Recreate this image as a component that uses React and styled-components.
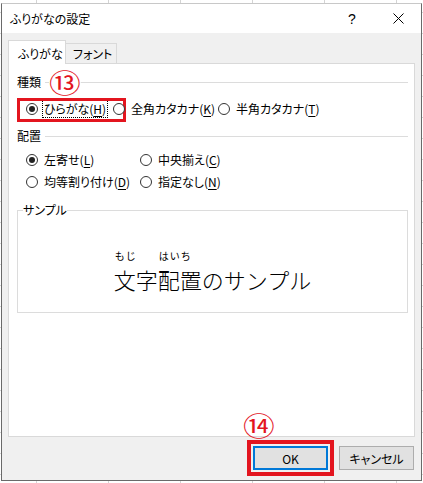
import React from 'react';
import styled, { createGlobalStyle, css } from 'styled-components';

const GlobalStyle = createGlobalStyle`
  html, body {
    margin: 0;
    padding: 0;
    background: #fff;
  }
  body {
    font-family: "Noto Sans CJK JP", "Noto Sans", sans-serif;
    color: #000;
  }
`;

const RED = '#e3151f';

const Page = styled.div`
  width: 423px;
  height: 483px;
  box-sizing: border-box;
  padding: 3px 0 0 1px;
  background-color: #fff;
  background-image:
    linear-gradient(to right, #d4d4d4 1px, transparent 1px),
    linear-gradient(to bottom, #d4d4d4 1px, transparent 1px);
  background-size: 72px 100%, 100% 21px;
  background-position: 36px 0, 0 12px;
`;

const Dialog = styled.div`
  width: 421px;
  height: 478px;
  box-sizing: border-box;
  border: 1px solid #6a6a6a;
  border-top-color: #c8c8c8;
  background: #f0f0f0;
  display: flex;
  flex-direction: column;
  font-size: 12px;
  font-feature-settings: "palt";
`;

const TitleBar = styled.div`
  height: 29px;
  flex-shrink: 0;
  background: #fff;
  display: flex;
  align-items: center;
  justify-content: space-between;
  padding-left: 8px;
`;

const Title = styled.span`
  font-size: 12px;
  line-height: 18px;
`;

const TitleButtons = styled.div`
  display: flex;
  align-items: center;
  height: 100%;
`;

const TitleButton = styled.span`
  width: 46px;
  height: 100%;
  display: flex;
  align-items: center;
  justify-content: center;
  font-size: 14px;
  font-family: "Liberation Sans", "DejaVu Sans", sans-serif;
`;

const Body = styled.div`
  flex: 1;
  display: flex;
  flex-direction: column;
  padding: 7px 6px 10px 6px;
`;

const TabList = styled.div`
  display: flex;
  align-items: flex-end;
  height: 24px;
  margin-bottom: -1px;
  position: relative;
  z-index: 1;
`;

const Tab = styled.div`
  box-sizing: border-box;
  border: 1px solid #d9d9d9;
  display: flex;
  align-items: center;
  line-height: 18px;
  ${p => p.$active
    ? css`
        height: 24px;
        width: 58px;
        background: #fff;
        border-bottom: none;
        padding: 2px 0 0 9px;
      `
    : css`
        height: 21px;
        width: 51px;
        background: #f0f0f0;
        border-left: none;
        padding: 1px 0 0 7px;
      `}
`;

const Panel = styled.div`
  height: 374px;
  box-sizing: border-box;
  background: #fff;
  border: 1px solid #d9d9d9;
  padding: 9px 6px 0 8px;
  display: flex;
  flex-direction: column;
`;

const SectionHeader = styled.div`
  position: relative;
  display: flex;
  align-items: center;
  gap: 4px;
  height: 18px;
  margin-top: ${p => p.$gap || 0}px;
`;

const SectionLabel = styled.span`
  line-height: 18px;
`;

const Rule = styled.span`
  flex: 1;
  height: 1px;
  background: #dcdcdc;
  margin-top: ${p => p.$offset || 0}px;
`;

const OptionGrid = styled.div`
  display: grid;
  grid-template-columns: ${p => p.$cols};
  row-gap: 4px;
  padding-left: 9px;
  margin-top: ${p => p.$gap}px;
`;

const Option = styled.label`
  position: relative;
  display: inline-flex;
  align-items: center;
  gap: 4px;
  height: 18px;
  line-height: 18px;
  white-space: nowrap;
  ${p => p.$marked && css`
    &::before {
      content: '';
      position: absolute;
      left: -9px;
      right: -13px;
      top: -2px;
      bottom: -4px;
      border: 3px solid ${RED};
    }
  `}
`;

const RadioCircle = styled.span`
  width: 12px;
  height: 12px;
  box-sizing: border-box;
  border: 1px solid #333;
  border-radius: 50%;
  background: #fff;
  display: flex;
  align-items: center;
  justify-content: center;
  flex-shrink: 0;
  &::after {
    content: '';
    width: 6px;
    height: 6px;
    border-radius: 50%;
    background: #222;
    display: ${p => (p.$checked ? 'block' : 'none')};
  }
`;

const OptionText = styled.span`
  box-sizing: border-box;
  height: 18px;
  padding: 0 1px;
  border: 1px dotted ${p => (p.$focused ? '#000' : 'transparent')};
  line-height: 16px;
  u {
    text-underline-offset: 2px;
    text-decoration-thickness: 1px;
  }
`;

const SampleBox = styled.fieldset`
  margin: 10px 0 0 0;
  padding: 0 0 0 5px;
  border: 1px solid #dcdcdc;
  min-width: 0;
`;

const Legend = styled.legend`
  padding: 0;
  line-height: 18px;
  font-size: 12px;
`;

const SampleArea = styled.div`
  height: 93px;
  box-sizing: border-box;
  padding-top: 31px;
  margin-left: -5px;
  display: flex;
  justify-content: center;
  align-items: flex-start;
  font-feature-settings: normal;
`;

const SampleLine = styled.div`
  display: flex;
  align-items: flex-end;
`;

const RubyGroup = styled.span`
  display: inline-flex;
  flex-direction: column;
  align-items: flex-start;
  gap: 5px;
`;

const RubyText = styled.span`
  font-size: 10px;
  line-height: 11px;
  letter-spacing: 1px;
  padding-left: 1px;
`;

const BaseText = styled.span`
  font-size: 22px;
  line-height: 26px;
  font-weight: 300;
`;

const ButtonBar = styled.div`
  display: flex;
  justify-content: flex-end;
  gap: 11px;
  margin-top: 9px;
  padding-right: 1px;
`;

const ButtonSlot = styled.div`
  position: relative;
`;

const Button = styled.button`
  width: 75px;
  height: 24px;
  box-sizing: border-box;
  margin: 0;
  padding: 0;
  font-family: inherit;
  font-size: 12px;
  font-feature-settings: "palt";
  color: #000;
  background: #e1e1e1;
  border: ${p => (p.$default ? '2px solid #0078d7' : '1px solid #adadad')};
  ${p => p.$marked && css`
    outline: 4px solid ${RED};
    outline-offset: 2px;
  `}
`;

const Callout = styled.span`
  position: absolute;
  left: ${p => p.$x}px;
  top: ${p => p.$y}px;
  font-size: 26px;
  line-height: 26px;
  color: ${RED};
  background: ${p => p.$bg || 'transparent'};
  transform: scaleX(1.22);
  transform-origin: left center;
  font-feature-settings: normal;
`;

const CloseIcon = () => (
  <svg width="11" height="11" viewBox="0 0 11 11">
    <path d="M0.5 0.5 L10.5 10.5 M10.5 0.5 L0.5 10.5" stroke="#000" strokeWidth="1" fill="none" />
  </svg>
);

const Radio = ({ label, keyChar, checked, focused, marked }) => (
  <Option $marked={marked}>
    <RadioCircle $checked={checked} />
    <OptionText $focused={focused}>
      {label}(<u>{keyChar}</u>)
    </OptionText>
  </Option>
);

export default function App() {
  return (
    <>
      <GlobalStyle />
      <Page>
        <Dialog>
          <TitleBar>
            <Title>ふりがなの設定</Title>
            <TitleButtons>
              <TitleButton>?</TitleButton>
              <TitleButton>
                <CloseIcon />
              </TitleButton>
            </TitleButtons>
          </TitleBar>
          <Body>
            <TabList>
              <Tab $active>ふりがな</Tab>
              <Tab>フォント</Tab>
            </TabList>
            <Panel>
              <SectionHeader>
                <SectionLabel>種類</SectionLabel>
                <Rule $offset={1} />
                <Callout $x={32} $y={-4} $bg="#fff">⑬</Callout>
              </SectionHeader>
              <OptionGrid $cols="87px 105px auto" $gap={9}>
                <Radio label="ひらがな" keyChar="H" checked focused marked />
                <Radio label="全角カタカナ" keyChar="K" />
                <Radio label="半角カタカナ" keyChar="T" />
              </OptionGrid>
              <SectionHeader $gap={9}>
                <SectionLabel>配置</SectionLabel>
                <Rule />
              </SectionHeader>
              <OptionGrid $cols="114px auto" $gap={6}>
                <Radio label="左寄せ" keyChar="L" checked />
                <Radio label="中央揃え" keyChar="C" />
                <Radio label="均等割り付け" keyChar="D" />
                <Radio label="指定なし" keyChar="N" />
              </OptionGrid>
              <SampleBox>
                <Legend>サンプル</Legend>
                <SampleArea>
                  <SampleLine>
                    <RubyGroup>
                      <RubyText>もじ</RubyText>
                      <BaseText>文字</BaseText>
                    </RubyGroup>
                    <RubyGroup>
                      <RubyText>はいち</RubyText>
                      <BaseText>配置</BaseText>
                    </RubyGroup>
                    <BaseText>のサンプル</BaseText>
                  </SampleLine>
                </SampleArea>
              </SampleBox>
            </Panel>
            <ButtonBar>
              <ButtonSlot>
                <Callout $x={-10} $y={-34}>⑭</Callout>
                <Button $default $marked>OK</Button>
              </ButtonSlot>
              <Button>キャンセル</Button>
            </ButtonBar>
          </Body>
        </Dialog>
      </Page>
    </>
  );
}
